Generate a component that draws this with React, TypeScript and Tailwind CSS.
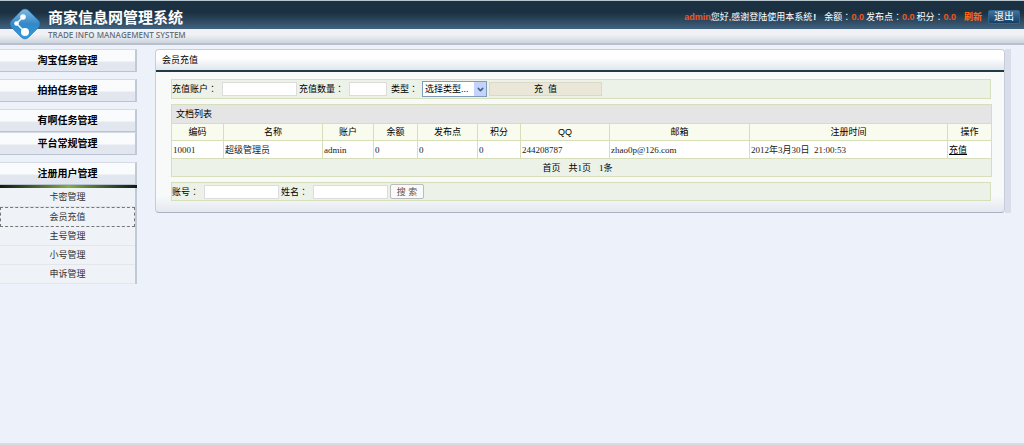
import { useState } from 'react';
import { ChevronDown } from 'lucide-react';

const menuGroups = [
  ['淘宝任务管理'],
  ['拍拍任务管理'],
  ['有啊任务管理', '平台常规管理'],
];

const userMenu = ['卡密管理', '会员充值', '主号管理', '小号管理', '申诉管理'];

const columns = [
  { title: '编码', width: 'w-[52px]' },
  { title: '名称', width: 'w-[99px]' },
  { title: '账户', width: 'w-[51px]' },
  { title: '余额', width: 'w-[44px]' },
  { title: '发布点', width: 'w-[60px]' },
  { title: '积分', width: 'w-[43px]' },
  { title: 'QQ', width: 'w-[89px]' },
  { title: '邮箱', width: 'w-[140px]' },
  { title: '注册时间', width: 'w-[198px]' },
  { title: '操作', width: 'w-[44px]' },
];

const members = [
  ['10001', '超级管理员', 'admin', '0', '0', '0', '244208787', 'zhao0p@126.com', '2012年3月30日 \u00a021:00:53'],
];

const inputClass = 'h-[14px] border border-[#dcdcdc] bg-white px-1 text-[9px] outline-none';

function Logo() {
  return (
    <svg viewBox="0 0 32 32" className="h-8 w-8 shrink-0" aria-hidden="true">
      <defs>
        <linearGradient id="logoFill" x1="0" y1="0" x2="1" y2="1">
          <stop offset="0" stopColor="#8cc0e4" />
          <stop offset="0.5" stopColor="#3488c8" />
          <stop offset="1" stopColor="#2b9fe2" />
        </linearGradient>
      </defs>
      <rect x="4" y="4" width="24" height="24" rx="5" transform="rotate(45 16 16)" fill="url(#logoFill)" stroke="#2674ae" strokeWidth="0.6" />
      <path d="M14 9 7.5 15.5 16 24" fill="none" stroke="#fff" strokeWidth="1.4" />
      <circle cx="14" cy="9" r="2.8" fill="#fff" />
      <circle cx="7.5" cy="15.5" r="2.3" fill="#fff" />
      <circle cx="16" cy="24" r="4" fill="#fff" />
    </svg>
  );
}

// full-width colon, centred in its cell
function Colon() {
  return <span className="font-['Noto_Sans_CJK_TC',sans-serif]">：</span>;
}

function Header() {
  return (
    <header className="relative">
      <div className="flex h-[29px] items-center justify-end border-t border-[#b8c6d0] bg-linear-to-b from-[#1b3041] from-40% to-[#41627f] pt-1 pr-1 text-[9px] leading-3 text-white">
        <b className="text-[#f0561d]">admin</b>
        <span>您好,感谢登陆使用本系统</span>
        <b className="ml-px">!</b>
        <span className="ml-2">余额<Colon /></span>
        <b className="text-[#f0561d]">0.0</b>
        <span className="ml-0.5">发布点<Colon /></span>
        <b className="text-[#f0561d]">0.0</b>
        <span className="ml-0.5">积分<Colon /></span>
        <b className="text-[#f0561d]">0.0</b>
        <a href="#refresh" className="ml-2 font-bold text-[#ff6a10]">刷新</a>
        <button type="button" className="ml-1.5 h-[14px] w-8 rounded-xs border border-[#32648d] bg-linear-to-b from-[#3e75a2] to-[#163d63] text-[10px] leading-3">
          退出
        </button>
      </div>
      <div className="h-4 border-b-2 border-[#b9c0cc] bg-linear-to-b from-[#f0f1f4] from-40% to-[#cdd5df]" />
      <div className="absolute top-2 left-[9px] flex items-start gap-[7px]">
        <Logo />
        <div className="text-white">
          <h1 className="text-[15px] leading-5 font-bold">商家信息网管理系统</h1>
          <p className="pt-px font-['Open_Sans',sans-serif] text-[8px] leading-3 font-semibold text-[#66717e]">
            TRADE INFO MANAGEMENT SYSTEM
          </p>
        </div>
      </div>
    </header>
  );
}

function MenuHeading({ title }: { title: string }) {
  return (
    <button
      type="button"
      className="block h-[23px] w-full border-t border-r-2 border-b border-t-[#d5dae5] border-r-[#c0c9d6] border-b-[#bac3d1] bg-linear-to-b from-[#fafbfd] from-50% to-[#e2e6ee] to-60% text-[10px] leading-5 font-bold text-black"
    >
      {title}
    </button>
  );
}

function Sidebar() {
  const [active, setActive] = useState('会员充值');

  return (
    <nav className="flex w-[137px] shrink-0 flex-col gap-[7px]">
      {menuGroups.map((group) => (
        <div key={group[0]}>
          {group.map((title) => (
            <MenuHeading key={title} title={title} />
          ))}
        </div>
      ))}
      <div>
        <MenuHeading title="注册用户管理" />
        <div className="h-[3px] bg-linear-to-r from-[#111a12] via-[#86ad45] to-[#111a12]" />
        <ul className="border-r-2 border-[#c0c9d6] bg-[#eff2f6] text-center text-[9px] text-[#333]">
          {userMenu.map((item) => (
            <li key={item} className={item === active ? 'border border-dashed border-[#777]' : 'border-b border-[#e3e7ec]'}>
              <a
                href="#menu"
                onClick={() => setActive(item)}
                className="block h-[18px] leading-[18px]"
              >
                {item}
              </a>
            </li>
          ))}
        </ul>
      </div>
    </nav>
  );
}

function MemberTable() {
  return (
    <table className="w-full table-fixed border-collapse border border-[#d6dfba] text-[9px] leading-3">
      <colgroup>
        {columns.map((column) => (
          <col key={column.title} className={column.width} />
        ))}
      </colgroup>
      <thead>
        <tr className="h-[19px] bg-[#e5e5e5]">
          <th colSpan={10} className="px-1 text-left font-normal">文档列表</th>
        </tr>
        <tr className="h-[17px] bg-[#f9fbee]">
          {columns.map((column) => (
            <th key={column.title} className="border border-[#d6dfba] p-0 font-normal">{column.title}</th>
          ))}
        </tr>
      </thead>
      <tbody>
        {members.map((member) => (
          <tr key={member[0]} className="h-[18px] bg-white font-['Liberation_Serif','Noto_Sans_CJK_SC',serif] text-[#222]">
            {member.map((value, i) => (
              <td key={i} className="border border-[#d6dfba] px-px py-0 whitespace-nowrap">{value}</td>
            ))}
            <td className="border border-[#d6dfba] px-px py-0">
              <a href="#recharge" className="text-black underline">充值</a>
            </td>
          </tr>
        ))}
      </tbody>
      <tfoot>
        <tr className="h-[18px] bg-[#ecf2e8]">
          <td colSpan={10} className="p-0">
            <div className="flex justify-center gap-2 pr-2 font-['Liberation_Serif','Noto_Sans_CJK_SC',serif]">
              <span>首页</span>
              <span>共1页</span>
              <span>1条</span>
            </div>
          </td>
        </tr>
      </tfoot>
    </table>
  );
}

export default function App() {
  return (
    <div className="flex min-h-screen flex-col bg-[#edf1fa] font-['Liberation_Sans','Noto_Sans_CJK_SC',sans-serif] text-black">
      <Header />
      <div className="flex grow items-start gap-[18px] pt-1">
        <Sidebar />
        <main className="mr-[13px] min-w-0 grow border-r-[6px] border-[#d9deea]">
          <section className="rounded-sm border border-[#c6ccda] border-b-[#aab2c2] bg-linear-to-b from-[#f8faf9] from-90% to-[#e3e8f1]">
            <h2 className="h-[22px] rounded-t-sm border-b-2 border-[#203847] bg-linear-to-b from-white from-40% to-[#dfe6ed] pl-[6px] text-[9px] leading-5">
              会员充值
            </h2>
            <div className="flex flex-col gap-[5px] pt-[7px] pr-[13px] pb-[11px] pl-[15px] text-[9px] leading-3">
              <form className="flex h-5 items-center border border-[#d6dfba] bg-[#ecf2e8]">
                <label htmlFor="account">充值账户<Colon /></label>
                <input id="account" className={`${inputClass} ml-[5px] w-[75px]`} />
                <label htmlFor="amount" className="ml-0.5">充值数量<Colon /></label>
                <input id="amount" className={`${inputClass} ml-[5px] w-[38px]`} />
                <label htmlFor="type" className="ml-1">类型<Colon /></label>
                <div className="relative ml-1">
                  <select id="type" className="block h-4 w-[65px] appearance-none border border-[#7f9db9] bg-white pl-0.5 text-[9px] leading-3 outline-none">
                    <option>选择类型...</option>
                  </select>
                  <span className="pointer-events-none absolute top-px right-px flex h-[14px] w-3 items-center justify-center bg-[#c3d3fb] text-[#41608d]">
                    <ChevronDown size={9} strokeWidth={4} />
                  </span>
                </div>
                <button type="button" className="ml-0.5 h-[14px] w-[113px] border border-[#ddd9c6] bg-[#ebe7d8] leading-3">
                  充&nbsp; 值
                </button>
              </form>
              <MemberTable />
              <form className="flex h-[19px] items-center border border-[#d6dfba] bg-[#ecf2e8]">
                <label htmlFor="user">账号<Colon /></label>
                <input id="user" className={`${inputClass} ml-[5px] w-[75px]`} />
                <label htmlFor="name" className="ml-0.5">姓名<Colon /></label>
                <input id="name" className={`${inputClass} ml-[5px] w-[75px]`} />
                <button type="button" className="ml-0.5 h-[15px] w-[34px] rounded-xs border border-[#bbb] bg-[#fafafa] leading-3 text-[#555]">
                  搜 索
                </button>
              </form>
            </div>
          </section>
        </main>
      </div>
      <footer className="h-0.5 bg-[#d5dce6]" />
    </div>
  );
}
